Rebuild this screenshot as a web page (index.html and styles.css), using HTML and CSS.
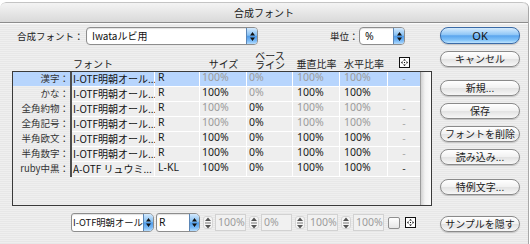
FILE: index.html
```html
<!DOCTYPE html>
<html lang="ja">
<head>
<meta charset="utf-8">
<title>合成フォント</title>
<link rel="stylesheet" href="styles.css">
</head>
<body>
<div class="window">
  <div class="titlebar">合成フォント</div>
  <div class="content">
    <div class="main">
      <div class="toprow">
        <span class="lbl lbl-set">合成フォント：</span>
        <div class="popup pop-set"><span class="ptext">Iwataルビ用</span><span class="parrows"><svg width="5" height="9" viewBox="0 0 5 9"><path d="M2.5 0L5 3.5H0Z M0 5.5H5L2.5 9Z" fill="#111"/></svg></span></div>
        <span class="lbl lbl-unit">単位：</span>
        <div class="popup pop-unit"><span class="ptext num">%</span><span class="parrows"><svg width="5" height="9" viewBox="0 0 5 9"><path d="M2.5 0L5 3.5H0Z M0 5.5H5L2.5 9Z" fill="#111"/></svg></span></div>
      </div>

      <div class="thead">
        <div></div><div></div>
        <div class="h h-font">フォント</div>
        <div></div>
        <div class="h">サイズ</div>
        <div class="h h2"><span class="hl">ベース</span><span class="hl">ライン</span></div>
        <div class="h">垂直比率</div>
        <div class="h">水平比率</div>
        <div class="h h-icon"><svg width="11" height="11" viewBox="0 0 11 11"><rect x=".5" y=".5" width="10" height="10" fill="#fff" stroke="#111"/><path d="M5.5 2L7 3.5H4Z M5.5 9L4 7.5H7Z M2 5.5L3.5 4V7Z M9 5.5L7.5 7V4Z" fill="#111"/><rect x="5" y="5" width="1" height="1" fill="#111"/></svg></div>
      </div>

      <div class="table">
        <div class="rows">
          <div class="row sel">
            <div class="c lab">漢字：</div><div class="sep"></div>
            <div class="c font">I-OTF明朝オール...</div>
            <div class="c num">R</div>
            <div class="c num g">100%</div><div class="c num g">0%</div><div class="c num g">100%</div><div class="c num g">100%</div>
            <div class="c dash g">-</div>
          </div>
          <div class="row">
            <div class="c lab">かな：</div><div class="sep"></div>
            <div class="c font">I-OTF明朝オール...</div>
            <div class="c num">R</div>
            <div class="c num">100%</div><div class="c num g">0%</div><div class="c num">100%</div><div class="c num">100%</div>
            <div class="c dash"></div>
          </div>
          <div class="row">
            <div class="c lab">全角約物：</div><div class="sep"></div>
            <div class="c font">I-OTF明朝オール...</div>
            <div class="c num">R</div>
            <div class="c num g">100%</div><div class="c num">0%</div><div class="c num g">100%</div><div class="c num g">100%</div>
            <div class="c dash g">-</div>
          </div>
          <div class="row">
            <div class="c lab">全角記号：</div><div class="sep"></div>
            <div class="c font">I-OTF明朝オール...</div>
            <div class="c num">R</div>
            <div class="c num g">100%</div><div class="c num">0%</div><div class="c num g">100%</div><div class="c num g">100%</div>
            <div class="c dash g">-</div>
          </div>
          <div class="row">
            <div class="c lab">半角欧文：</div><div class="sep"></div>
            <div class="c font">I-OTF明朝オール...</div>
            <div class="c num">R</div>
            <div class="c num">100%</div><div class="c num">0%</div><div class="c num">100%</div><div class="c num">100%</div>
            <div class="c dash g">-</div>
          </div>
          <div class="row">
            <div class="c lab">半角数字：</div><div class="sep"></div>
            <div class="c font">I-OTF明朝オール...</div>
            <div class="c num">R</div>
            <div class="c num">100%</div><div class="c num">0%</div><div class="c num">100%</div><div class="c num">100%</div>
            <div class="c dash g">-</div>
          </div>
          <div class="row">
            <div class="c lab">ruby中黒：</div><div class="sep"></div>
            <div class="c font">A-OTF リュウミ...</div>
            <div class="c num">L-KL</div>
            <div class="c num">100%</div><div class="c num">0%</div><div class="c num">100%</div><div class="c num">100%</div>
            <div class="c dash">-</div>
          </div>
        </div>
        <div class="vscroll"></div>
      </div>

      <div class="controls">
        <div class="popup bp-font"><span class="ptext">I-OTF明朝オール</span><span class="parrows"><svg width="5" height="9" viewBox="0 0 5 9"><path d="M2.5 0L5 3.5H0Z M0 5.5H5L2.5 9Z" fill="#111"/></svg></span></div>
        <div class="popup bp-r"><span class="ptext num">R</span><span class="parrows"><svg width="5" height="9" viewBox="0 0 5 9"><path d="M2.5 0L5 3.5H0Z M0 5.5H5L2.5 9Z" fill="#111"/></svg></span></div>
        <div class="spin"><span class="stepper"><svg width="8" height="12" viewBox="0 0 8 12"><path d="M4 0.5L7 4H1Z M1 8H7L4 11.5Z" fill="#555"/><rect x="1" y="5.5" width="6" height="1" fill="#777"/></svg></span><span class="field num">100%</span></div>
        <div class="spin"><span class="stepper"><svg width="8" height="12" viewBox="0 0 8 12"><path d="M4 0.5L7 4H1Z M1 8H7L4 11.5Z" fill="#555"/><rect x="1" y="5.5" width="6" height="1" fill="#777"/></svg></span><span class="field num">0%</span></div>
        <div class="spin"><span class="stepper"><svg width="8" height="12" viewBox="0 0 8 12"><path d="M4 0.5L7 4H1Z M1 8H7L4 11.5Z" fill="#555"/><rect x="1" y="5.5" width="6" height="1" fill="#777"/></svg></span><span class="field num">100%</span></div>
        <div class="spin"><span class="stepper"><svg width="8" height="12" viewBox="0 0 8 12"><path d="M4 0.5L7 4H1Z M1 8H7L4 11.5Z" fill="#555"/><rect x="1" y="5.5" width="6" height="1" fill="#777"/></svg></span><span class="field num">100%</span></div>
        <span class="check"></span>
        <span class="ficon"><svg width="11" height="11" viewBox="0 0 11 11"><rect x=".5" y=".5" width="10" height="10" fill="#fff" stroke="#111"/><path d="M5.5 2L7 3.5H4Z M5.5 9L4 7.5H7Z M2 5.5L3.5 4V7Z M9 5.5L7.5 7V4Z" fill="#111"/><rect x="5" y="5" width="1" height="1" fill="#111"/></svg></span>
      </div>
    </div>

    <div class="buttons">
      <div class="btn btn-ok">OK</div>
      <div class="btn b-cancel">キャンセル</div>
      <div class="btn b-new">新規...</div>
      <div class="btn b-std">保存</div>
      <div class="btn b-std">フォントを削除</div>
      <div class="btn b-std">読み込み...</div>
      <div class="btn b-special">特例文字...</div>
      <div class="btn b-hide">サンプルを隠す</div>
    </div>
  </div>
</div>
</body>
</html>
```

FILE: styles.css
```css
* { box-sizing: border-box; margin: 0; padding: 0; }

body {
  margin: 0;
  width: 530px;
  height: 244px;
  overflow: hidden;
  background: #ffffff;
  font-family: "Noto Sans CJK JP", sans-serif;
  font-size: 10px;
  color: #111;
}

.window {
  margin-top: 2px;
  width: 529px;
  height: 242px;
  border-right: 1px solid #a8a8a8;
  border-radius: 6px 6px 0 0;
  overflow: hidden;
  display: flex;
  flex-direction: column;
}

.titlebar {
  height: 21px;
  flex: none;
  border-top: 1px solid #c4c4c4;
  border-bottom: 1px solid #8c8c8c;
  border-radius: 6px 6px 0 0;
  background: linear-gradient(#f4f4f4, #d9d9d9);
  text-align: center;
  line-height: 19px;
  color: #1a1a1a;
}

.content {
  flex: 1;
  display: flex;
  padding: 3px 0 0 12px;
  border-top: 1px solid #fbfbfb;
  background: repeating-linear-gradient(#efefef 0 1px, #e7e7e7 1px 2px);
}

.main {
  width: 420px;
  display: flex;
  flex-direction: column;
}

/* top row */
.toprow {
  height: 18px;
  display: flex;
  align-items: center;
}
.lbl { font-size: 9.5px; color: #222; white-space: nowrap; }
.lbl-set { width: 74px; padding-left: 5px; }
.lbl-unit { width: 29px; margin-left: 72px; }

.popup {
  display: flex;
  height: 18px;
  border: 1px solid #8d8d8d;
  border-radius: 4px;
  background: #fff;
  box-shadow: inset 0 1px 1px rgba(0,0,0,0.12);
}
.ptext {
  flex: 1;
  padding-left: 5px;
  line-height: 16px;
  white-space: nowrap;
}
.parrows {
  width: 11px;
  flex: none;
  display: flex;
  align-items: center;
  justify-content: center;
  border-left: 1px solid #5b86b6;
  border-radius: 0 3px 3px 0;
  background: linear-gradient(#d3e9fd, #86c0f3 45%, #4f9be9 52%, #79b9f5 80%, #b5dcfd);
}
.pop-set { width: 172px; }
.pop-unit { width: 46px; }

.num { font-family: "Noto Sans", sans-serif; font-size: 10.5px; }

/* header */
.thead {
  height: 26px;
  display: grid;
  grid-template-columns: 57px 2px 83px 45px 47px 46px 47px 48px 32px;
  align-items: end;
  padding-left: 1px;
}
.h {
  text-align: center;
  line-height: 14px;
  color: #222;
  white-space: nowrap;
}
.h2 { display: flex; flex-direction: column; align-items: center; margin-bottom: 2px; }
.hl { display: block; height: 9px; line-height: 9px; }
.h-font { text-align: left; padding-left: 1px; }
.h-icon { height: 11px; margin-bottom: 3px; display: flex; justify-content: center; }
.h-icon svg { display: block; }

/* table */
.table {
  height: 135px;
  border: 1px solid #3a3a3a;
  display: flex;
  background: repeating-linear-gradient(#efefef 0 1px, #e8e8e8 1px 2px);
}
.rows { width: 407px; }
.row {
  display: grid;
  grid-template-columns: 57px 2px 83px 45px 47px 46px 47px 48px 32px;
  height: 15px;
}
.c {
  background: #eeeeee;
  border-right: 1px solid #fff;
  border-bottom: 1px solid #fff;
  line-height: 13px;
  padding-left: 2px;
  white-space: nowrap;
}
.c.num { line-height: 10px; color: #1a1a1a; }
.c.num.g, .c.g { color: #9b9b9b; }
.c.lab {
  background: transparent;
  background-clip: padding-box;
  border-right: 0;
  border-bottom: 1px solid transparent;
  text-align: right;
  padding: 0 1px 0 0;
  font-size: 9.5px;
  color: #333;
}
.c.font { padding-left: 1px; }
.row .c:nth-child(4) { padding-left: 3px; }
.row .c:nth-child(7),
.row .c:nth-child(8) { padding-left: 4px; }
.c.dash { border-right: 0; text-align: center; padding-left: 0; line-height: 12px; }
.sep { background: #4d4d4d; }
.sel .c { background: #b7d5fd; background-clip: padding-box; }
.sel .c.lab { background: #b7d5fd; background-clip: padding-box; }

.vscroll {
  width: 11px;
  border-left: 1px solid #9c9c9c;
  background: linear-gradient(to right, #d2d2d2, #f3f3f3 40%, #fbfbfb);
}

/* bottom controls */
.controls {
  margin-top: 7px;
  height: 19px;
  display: flex;
  align-items: center;
  padding-left: 59px;
}
.bp-font { width: 83px; height: 19px; border-radius: 3px 5px 5px 3px; }
.bp-font .ptext { padding-left: 1px; line-height: 17px; font-size: 9.3px; }
.bp-r { width: 44px; height: 19px; margin-left: 2px; border-radius: 3px 5px 5px 3px; }
.bp-r .ptext { padding-left: 2px; line-height: 17px; }
.controls .parrows { width: 10px; border-radius: 0 4px 4px 0; }

.spin {
  display: flex;
  align-items: center;
  margin-left: 3px;
}
.stepper {
  width: 10px;
  height: 13px;
  display: flex;
  align-items: center;
  justify-content: center;
  border: 1px solid #d6d6d6;
  border-radius: 3px;
  background: #f4f4f4;
}
.stepper svg { display: block; }
.field {
  width: 31px;
  height: 17px;
  margin-left: 2px;
  border: 1px solid #d2d2d2;
  background: #f1f1f1;
  color: #9c9c9c;
  line-height: 14px;
  padding-left: 2px;
  white-space: nowrap;
}
.check {
  width: 12px;
  height: 12px;
  margin-left: 4px;
  border: 1px solid #8f8f8f;
  border-radius: 2px;
  background: linear-gradient(#ffffff, #e6e6e6);
}
.ficon { margin-left: 5px; display: flex; }
.ficon svg { display: block; }

/* right buttons */
.buttons {
  width: 80px;
  margin-left: 8px;
  display: flex;
  flex-direction: column;
}
.btn {
  height: 16px;
  flex: none;
  border: 1px solid #8a8a8a;
  border-radius: 8px;
  background: linear-gradient(#ffffff, #f1f1f1 50%, #e2e2e2 52%, #f7f7f7);
  box-shadow: 0 1px 1px rgba(0,0,0,0.18);
  text-align: center;
  line-height: 14px;
  color: #222;
  white-space: nowrap;
}
.btn-ok {
  height: 17px;
  line-height: 15px;
  border-color: #3a6aa6;
  background: linear-gradient(#d6ebfd, #8fc6f6 45%, #5aa5ee 52%, #80c2f8 80%, #bfe4fe);
  font-family: "Noto Sans", sans-serif;
  font-size: 11px;
  color: #111;
}
.b-cancel { margin-top: 7px; }
.b-new { margin-top: 13px; }
.b-std { margin-top: 7px; }
.b-special { margin-top: 14px; }
.b-hide { margin-top: 21px; }
```
